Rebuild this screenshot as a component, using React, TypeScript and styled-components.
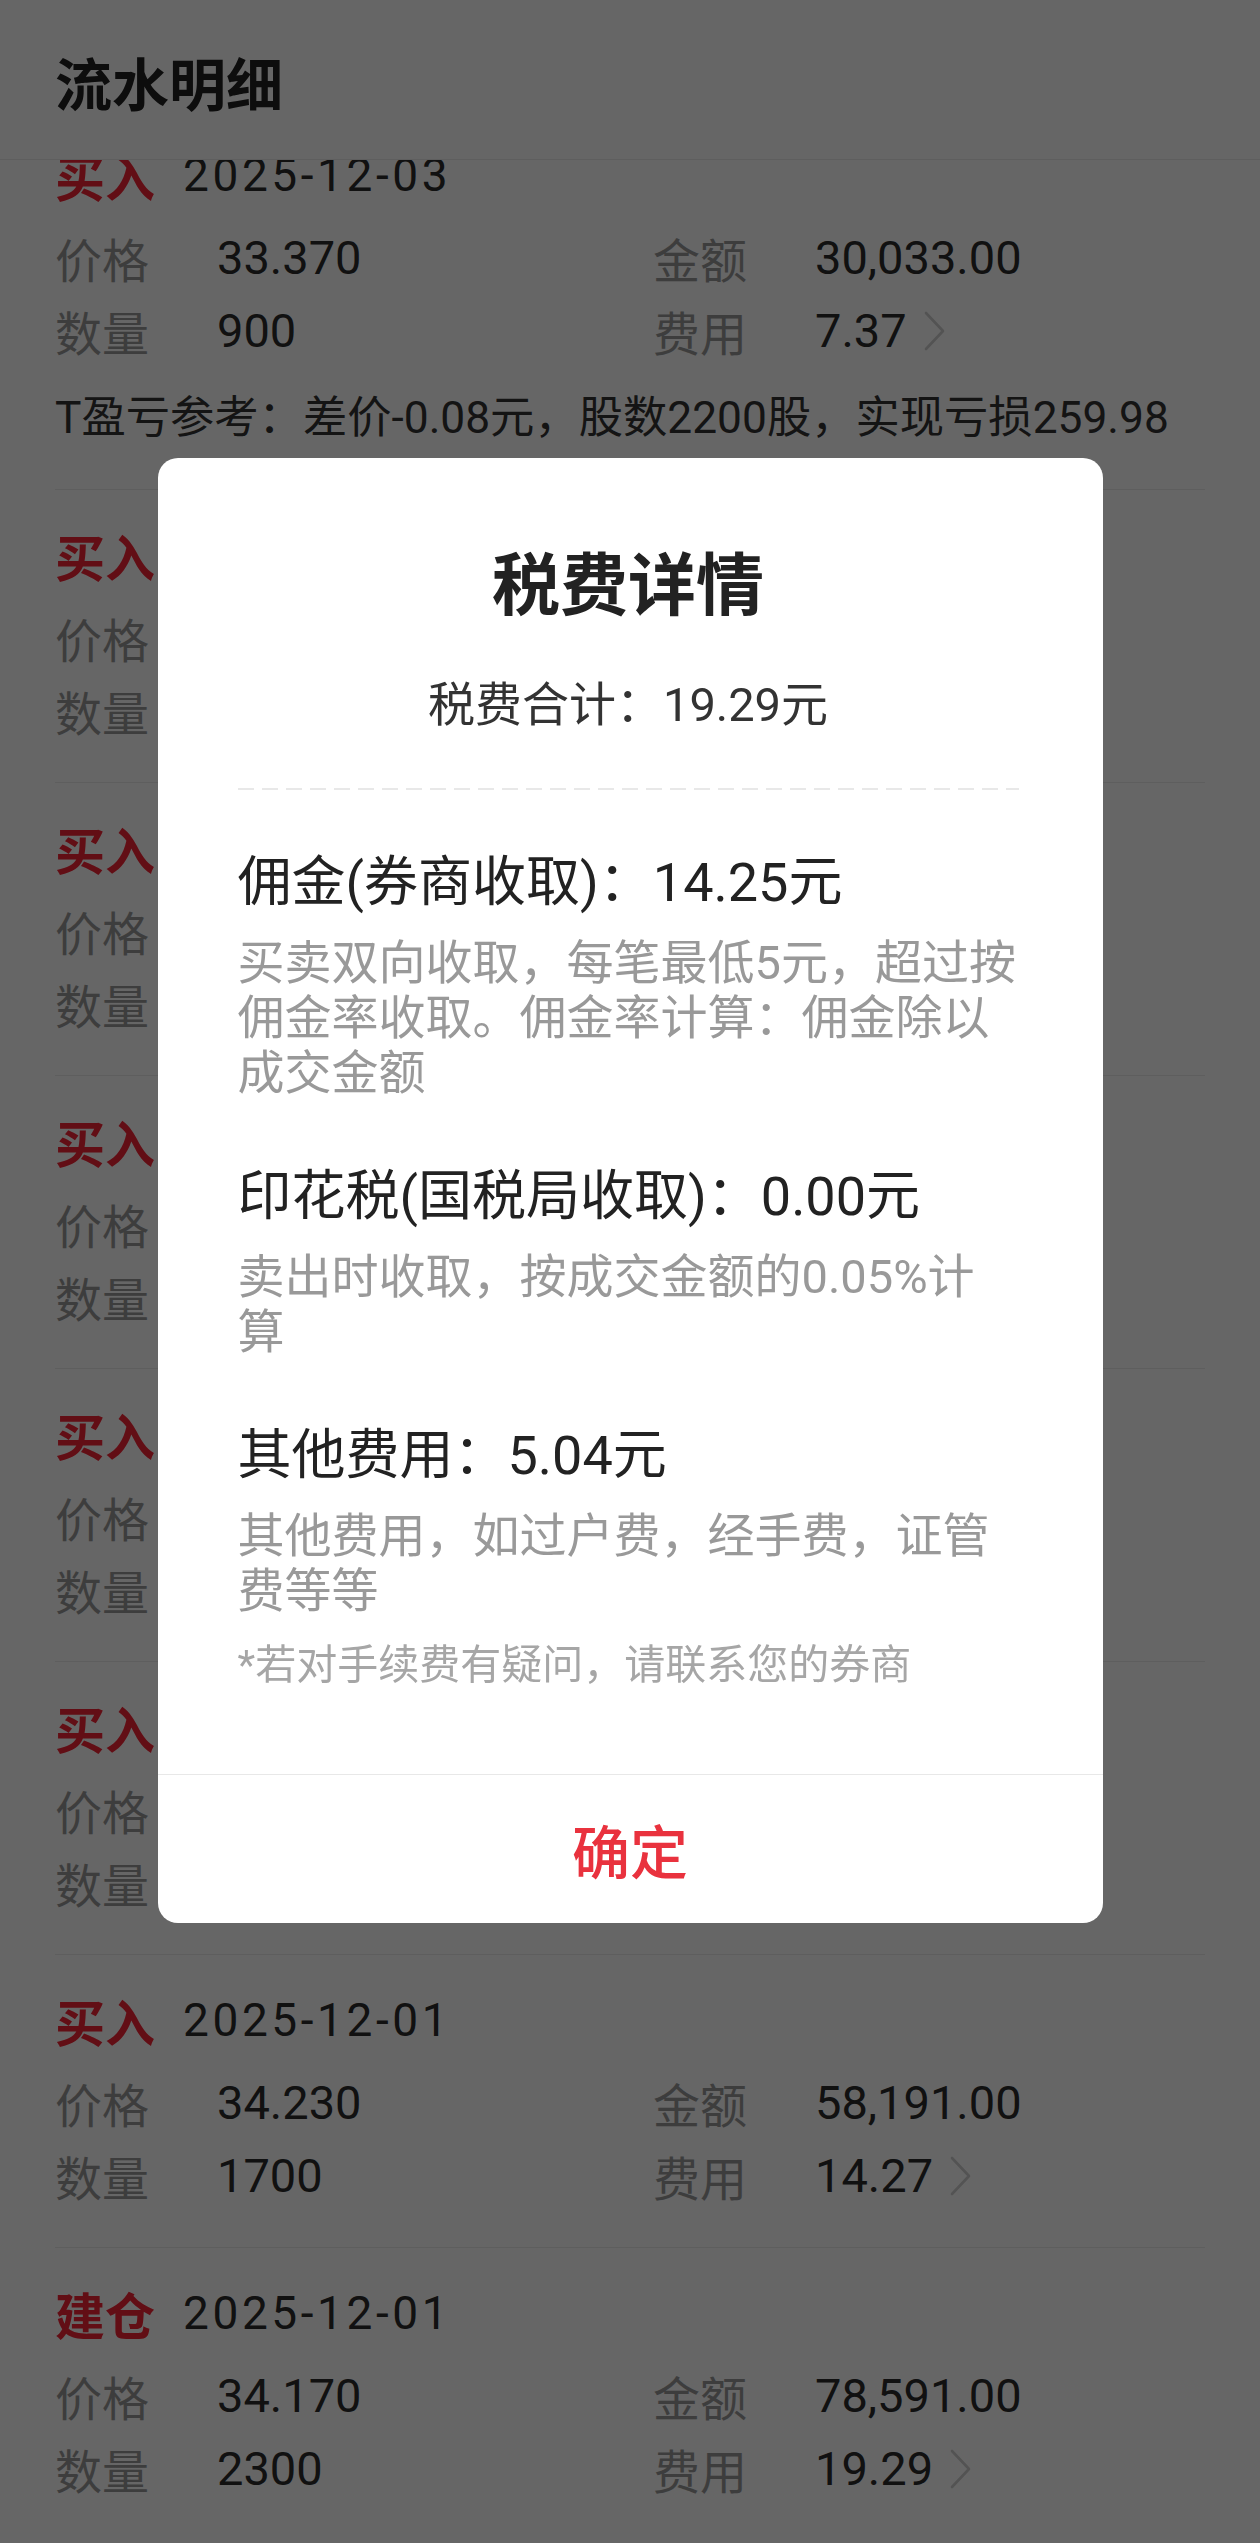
import React from 'react'
import styled, { createGlobalStyle } from 'styled-components'

const GlobalStyle = createGlobalStyle`
html, body {
  margin: 0;
  padding: 0;
  height: 100%;
}
body {
  font-family: Roboto, "Noto Sans CJK SC", sans-serif;
  background: #fff;
  overflow: hidden;
}
#root {
  height: 100%;
}
`

type Trade = {
    kind: string
    date: string
    price: string
    qty: string
    amount: string
    fee: string
    note?: string
}

const trades: Trade[] = [
    { kind: '买入', date: '2025-12-03', price: '33.370', qty: '900', amount: '30,033.00', fee: '7.37', note: 'T盈亏参考：差价-0.08元，股数2200股，实现亏损259.98' },
    { kind: '买入', date: '2025-12-02', price: '33.290', qty: '1200', amount: '39,948.00', fee: '9.80' },
    { kind: '买入', date: '2025-12-02', price: '33.680', qty: '800', amount: '26,944.00', fee: '6.61' },
    { kind: '买入', date: '2025-12-02', price: '33.910', qty: '600', amount: '20,346.00', fee: '5.10' },
    { kind: '买入', date: '2025-12-01', price: '34.050', qty: '1000', amount: '34,050.00', fee: '8.36' },
    { kind: '买入', date: '2025-12-01', price: '34.120', qty: '500', amount: '17,060.00', fee: '5.06' },
    { kind: '买入', date: '2025-12-01', price: '34.230', qty: '1700', amount: '58,191.00', fee: '14.27' },
    { kind: '建仓', date: '2025-12-01', price: '34.170', qty: '2300', amount: '78,591.00', fee: '19.29' },
]

const feeSections = [
    { title: '佣金(券商收取)：14.25元', desc: '买卖双向收取，每笔最低5元，超过按佣金率收取。佣金率计算：佣金除以成交金额' },
    { title: '印花税(国税局收取)：0.00元', desc: '卖出时收取，按成交金额的0.05%计算' },
    { title: '其他费用：5.04元', desc: '其他费用，如过户费，经手费，证管费等等' },
]

const Chevron = () => (
    <ChevronIcon width="24" height="40" viewBox="0 0 24 40">
        <polyline points="4,2 21,20 4,38" fill="none" stroke="#cfcfcf" strokeWidth="2.6" strokeLinecap="round" strokeLinejoin="round" />
    </ChevronIcon>
)

const TradeItem = ({ trade }: { trade: Trade }) => {
    return (
        <Item>
            <ItemHead>
                <Kind>{trade.kind}</Kind>
                <DateText>{trade.date}</DateText>
            </ItemHead>
            <Grid>
                <Cell>
                    <Label>价格</Label>
                    <Value>{trade.price}</Value>
                </Cell>
                <Cell>
                    <Label>金额</Label>
                    <Value>{trade.amount}</Value>
                </Cell>
                <Cell>
                    <Label>数量</Label>
                    <Value>{trade.qty}</Value>
                </Cell>
                <Cell>
                    <Label>费用</Label>
                    <Value>{trade.fee}</Value>
                    <Chevron />
                </Cell>
            </Grid>
            {trade.note && <Note>{trade.note}</Note>}
        </Item>
    )
}

const App = () => {
    return (
        <>
            <GlobalStyle />
            <Page>
                <Header>
                    <Title>流水明细</Title>
                </Header>
                <Viewport>
                    <List>
                        {trades.map((t, i) => (
                            <TradeItem key={i} trade={t} />
                        ))}
                    </List>
                </Viewport>
            </Page>

            <Overlay>
                <Dialog>
                    <DialogBody>
                        <DialogTitle>税费详情</DialogTitle>
                        <Total>税费合计：19.29元</Total>
                        <Dashed />
                        {feeSections.map((s, i) => (
                            <Section key={i} first={i === 0}>
                                <SectionTitle>{s.title}</SectionTitle>
                                <SectionDesc>{s.desc}</SectionDesc>
                            </Section>
                        ))}
                        <Hint>*若对手续费有疑问，请联系您的券商</Hint>
                    </DialogBody>
                    <Footer>
                        <Confirm>确定</Confirm>
                    </Footer>
                </Dialog>
            </Overlay>
        </>
    )
}

export default App

const Page = styled.div`
height: 100%;
display: flex;
flex-direction: column;
background: #fff;
`

const Header = styled.div`
height: 160px;
flex-shrink: 0;
display: flex;
align-items: center;
padding: 2px 55px 0;
box-sizing: border-box;
border-bottom: 1px solid #ebebeb;
background: #fff;
`

const Title = styled.div`
font-size: 57px;
font-weight: 700;
color: #222;
`

const Viewport = styled.div`
flex: 1;
overflow: hidden;
padding: 0 55px;
`

const List = styled.div`
margin-top: -51px;
`

const Item = styled.div`
border-top: 1px solid #ebebeb;
padding: 35px 0;
`

const ItemHead = styled.div`
height: 60px;
display: flex;
align-items: center;
`

const Kind = styled.span`
font-size: 50px;
font-weight: 700;
color: #f52535;
`

const DateText = styled.span`
margin-left: 28px;
font-size: 46px;
letter-spacing: 3.6px;
color: #2b2b2b;
`

const Grid = styled.div`
margin-top: 16px;
display: grid;
grid-template-columns: 598px 1fr;
grid-auto-rows: 73px;
`

const Cell = styled.div`
display: flex;
align-items: center;
`

const Label = styled.span`
width: 162px;
flex-shrink: 0;
font-size: 47px;
color: #999;
`

const Value = styled.span`
font-size: 47px;
color: #2b2b2b;
`

const ChevronIcon = styled.svg`
margin-left: 15px;
flex-shrink: 0;
`

const Note = styled.div`
margin: 21px 0 6px;
line-height: 60px;
font-size: 44.3px;
color: #333;
white-space: nowrap;
`

const Overlay = styled.div`
position: fixed;
inset: 0;
background: rgba(0, 0, 0, 0.6);
display: flex;
justify-content: center;
align-items: flex-start;
padding-top: 458px;
box-sizing: border-box;
`

const Dialog = styled.div`
width: 945px;
background: #fff;
border-radius: 20px;
overflow: hidden;
`

const DialogBody = styled.div`
padding: 89px 84px 84px 80px;
`

const DialogTitle = styled.div`
font-size: 68px;
line-height: 80px;
font-weight: 700;
color: #222;
text-align: center;
`

const Total = styled.div`
margin-top: 48px;
font-size: 47px;
line-height: 60px;
color: #333;
text-align: center;
`

const Dashed = styled.div`
margin-top: 53px;
height: 2px;
background: repeating-linear-gradient(to right, #e8e8e8 0 16px, transparent 16px 24px);
`

const Section = styled.div<{ first?: boolean }>`
margin-top: ${p => (p.first ? '61px' : '65px')};
`

const SectionTitle = styled.div`
font-size: 54px;
line-height: 64px;
color: #222;
`

const SectionDesc = styled.div`
margin-top: 20px;
font-size: 47px;
line-height: 55px;
color: #999;
`

const Hint = styled.div`
margin-top: 22px;
font-size: 41px;
line-height: 50px;
color: #a6a6a6;
`

const Footer = styled.div`
height: 148px;
border-top: 1px solid #e8e8e8;
display: flex;
align-items: center;
justify-content: center;
`

const Confirm = styled.span`
font-size: 58px;
font-weight: 500;
color: #e9323e;
`
